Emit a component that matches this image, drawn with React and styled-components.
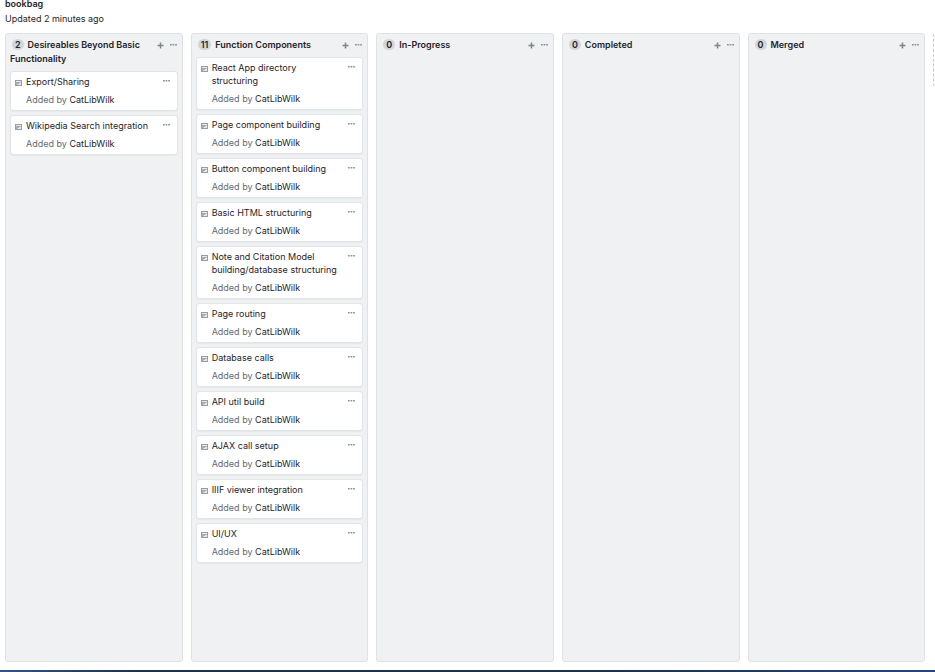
import React from "react";
import styled, { createGlobalStyle } from "styled-components";

const GlobalStyle = createGlobalStyle`
  * { box-sizing: border-box; }
  body {
    margin: 0;
    background: #fff;
    color: #1f2429;
    font-family: Inter, "Liberation Sans", sans-serif;
    font-size: 9px;
    line-height: 13px;
  }
  button { font: inherit; cursor: pointer; }
`;

const Page = styled.div`
  display: flex;
  flex-direction: column;
  min-height: 100vh;
  overflow: hidden;
`;

const ProjectHeader = styled.header`
  padding: 0 5px;
`;

const ProjectName = styled.h1`
  margin: 0;
  font-size: 9px;
  line-height: 8px;
  font-weight: 600;
`;

const Updated = styled.p`
  margin: 4px 0 8px;
`;

const Board = styled.main`
  display: flex;
  flex: 1;
  gap: 8px;
  padding: 0 5px;
  margin-bottom: 8px;
`;

const ColumnBox = styled.section`
  flex: 0 0 19vw;
  padding: 4px;
  background: #eff1f3;
  border: 1px solid #dfe2e5;
  border-radius: 3px;
`;

const ColumnHeader = styled.header`
  margin-bottom: 5px;
  line-height: 14px;
`;

const ColumnTitle = styled.h2`
  margin: 0;
  font-size: 9px;
  font-weight: 600;
`;

const Counter = styled.span`
  display: inline-block;
  min-width: 11px;
  margin: 0 4px 0 2px;
  padding: 0 3px;
  border-radius: 6px;
  background: #d3d6d8;
  line-height: 11px;
  text-align: center;
`;

const Tools = styled.div`
  display: flex;
  float: right;
  align-items: center;
  gap: 6px;
  height: 14px;
  margin: 0 1px 0 8px;
`;

const IconButton = styled.button`
  display: flex;
  flex: none;
  align-items: center;
  height: 8px;
  padding: 0;
  border: 0;
  background: none;
  color: ${(p) => (p.$strong ? "#7d848b" : "#8b9198")};
`;

const CardList = styled.ul`
  display: flex;
  flex-direction: column;
  gap: 4px;
  margin: 0;
  padding: 0;
  list-style: none;
`;

const CardBox = styled.li`
  display: flex;
  align-items: flex-start;
  padding: 3px 7px 4px 4px;
  background: #fff;
  border: 1px solid #e1e4e8;
  border-radius: 3px;
  box-shadow: 0 1px 1px rgba(27, 31, 35, 0.04);
`;

const NoteIcon = styled.svg`
  flex: none;
  width: 7px;
  height: 6px;
  margin: 5px 4px 0 0;
`;

const CardBody = styled.div`
  flex: 1;
  min-width: 0;
`;

const CardTitle = styled.p`
  margin: 0 0 5px;
`;

const Byline = styled.p`
  margin: 0;
  color: #626b75;
`;

const Author = styled.a`
  color: #1f2429;
  text-decoration: none;
`;

const CardMenu = styled(IconButton)`
  margin: 2px 0 0 4px;
`;

const AddColumn = styled.button`
  flex: 0 0 19vw;
  height: 54px;
  background: none;
  border: 1px dashed #c3c8cd;
  border-radius: 3px;
`;

const BottomEdge = styled.footer`
  height: 2px;
  background: linear-gradient(90deg, #2f5585, #1c3050 15%, #1c3050 65%, #24457a);
`;

const columns = [
  { title: "Desireables Beyond Basic Functionality", cards: ["Export/Sharing", "Wikipedia Search integration"] },
  {
    title: "Function Components",
    cards: [
      "React App directory structuring",
      "Page component building",
      "Button component building",
      "Basic HTML structuring",
      "Note and Citation Model building/database structuring",
      "Page routing",
      "Database calls",
      "API util build",
      "AJAX call setup",
      "IIIF viewer integration",
      "UI/UX",
    ],
  },
  { title: "In-Progress", cards: [] },
  { title: "Completed", cards: [] },
  { title: "Merged", cards: [] },
];

const Dots = () => (
  <svg width="7" height="2" viewBox="0 0 7 2" fill="currentColor" aria-hidden="true">
    <rect x="0" y="0" width="1.7" height="1.5" />
    <rect x="2.6" y="0" width="1.7" height="1.5" />
    <rect x="5.2" y="0" width="1.7" height="1.5" />
  </svg>
);

const Plus = () => (
  <svg width="7" height="7" viewBox="0 0 7 7" aria-hidden="true">
    <path d="M3.5 0.5v6M0.5 3.5h6" stroke="currentColor" strokeWidth="1.5" />
  </svg>
);

const Card = ({ title }) => (
  <CardBox>
    <NoteIcon viewBox="0 0 7 6" fill="none" stroke="#959da5" aria-hidden="true">
      <rect x="0.5" y="0.5" width="6" height="5" fill="#e6e8ea" />
      <path d="M1 2.5h4.5M1 3.5h3M1 4.5h1.5" strokeWidth="0.8" />
    </NoteIcon>
    <CardBody>
      <CardTitle>{title}</CardTitle>
      <Byline>
        Added by <Author href="#">CatLibWilk</Author>
      </Byline>
    </CardBody>
    <CardMenu type="button" aria-label="Card menu">
      <Dots />
    </CardMenu>
  </CardBox>
);

const Column = ({ title, cards }) => (
  <ColumnBox>
    <ColumnHeader>
      <Tools>
        <IconButton $strong type="button" aria-label="Add card">
          <Plus />
        </IconButton>
        <IconButton type="button" aria-label="Column menu">
          <Dots />
        </IconButton>
      </Tools>
      <ColumnTitle>
        <Counter>{cards.length}</Counter>
        {title}
      </ColumnTitle>
    </ColumnHeader>
    <CardList>
      {cards.map((c) => (
        <Card key={c} title={c} />
      ))}
    </CardList>
  </ColumnBox>
);

export default function App() {
  return (
    <>
      <GlobalStyle />
      <Page>
        <ProjectHeader>
          <ProjectName>bookbag</ProjectName>
          <Updated>Updated 2 minutes ago</Updated>
        </ProjectHeader>
        <Board>
          {columns.map((c) => (
            <Column key={c.title} {...c} />
          ))}
          <AddColumn type="button" aria-label="Add column" />
        </Board>
        <BottomEdge />
      </Page>
    </>
  );
}
